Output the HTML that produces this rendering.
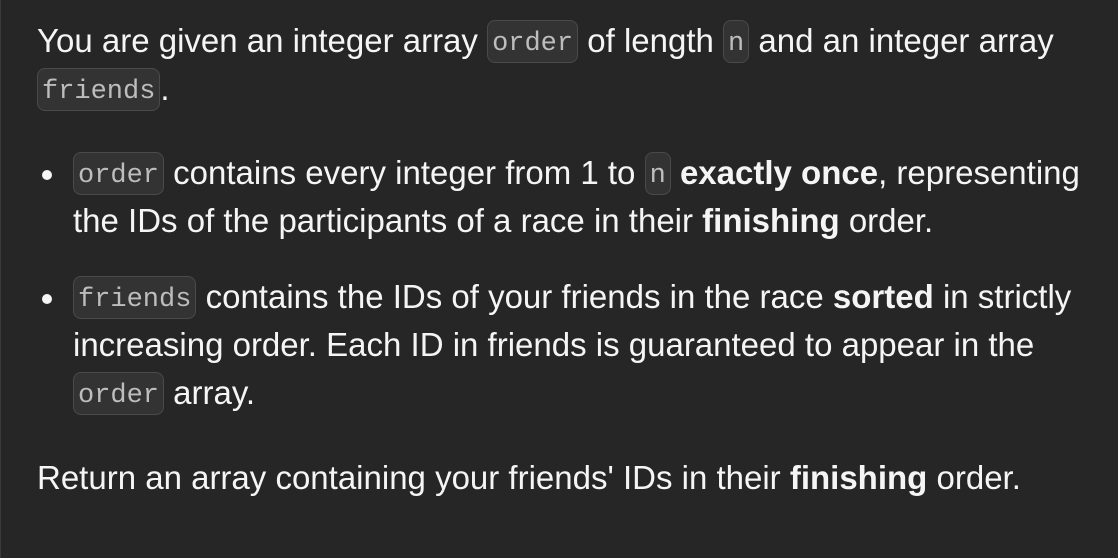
<!DOCTYPE html>
<html><head><style>
html,body{margin:0;padding:0}
body{width:1118px;height:558px;background:#262626;overflow:hidden;position:relative;font-family:"Liberation Sans",Arial,sans-serif;color:#f5f5f5;font-size:33px;line-height:48px}
.edge{position:absolute;left:0;top:0;width:1px;height:558px;background:#3a3a3a}
.wrap{position:absolute;left:37px;top:17px;width:1075px;white-space:nowrap}
p{margin:0}
code{font-family:"Liberation Mono",monospace;font-size:27px;line-height:32px;display:inline-block;vertical-align:top;margin-top:3px;color:#bdbdbd;background:#333;border:1.5px solid #4a4a4a;border-radius:8px;padding:7px 4px 2px}
ul{margin:36px 0 0 0;padding-left:36px;list-style:none}
li{margin-bottom:28px;position:relative}
li::before{content:"";position:absolute;left:-31px;top:21px;width:10px;height:10px;border-radius:50%;background:#f5f5f5}
b{font-weight:bold}
.last{margin-top:37px}
</style></head><body>
<div class="edge"></div>
<div class="wrap">
<p>You are given an integer array <code>order</code> of length <code>n</code> and an integer array<br><code>friends</code>.</p>
<ul>
<li><code>order</code> contains every integer from 1 to <code>n</code> <b>exactly once</b>, representing<br>the IDs of the participants of a race in their <b>finishing</b> order.</li>
<li><code>friends</code> contains the IDs of your friends in the race <b>sorted</b> in strictly<br>increasing order. Each ID in friends is guaranteed to appear in the<br><code>order</code> array.</li>
</ul>
<p class="last">Return an array containing your friends' IDs in their <b>finishing</b> order.</p>
</div>
</body></html>
